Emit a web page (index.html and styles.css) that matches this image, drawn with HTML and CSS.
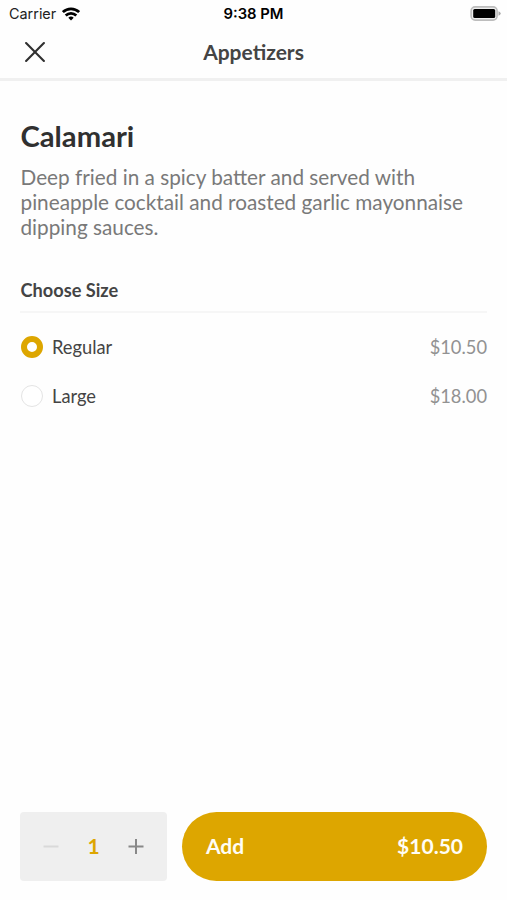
FILE: index.html
```html
<!DOCTYPE html>
<html lang="en">
<head>
<meta charset="utf-8">
<title>Appetizers</title>
<link rel="stylesheet" href="styles.css">
</head>
<body>
<div class="screen">
  <div class="status">
    <div class="carrier">
      <span>Carrier</span>
      <svg class="wifi" width="18" height="14" viewBox="0 0 18 14" fill="none" stroke="#000" stroke-width="2.7">
        <path d="M.9 5.1a11.6 11.6 0 0 1 16.2 0"/>
        <path d="M3.7 8.5a7.6 7.6 0 0 1 10.6 0"/>
        <path d="M6.3 10.8a3.9 3.9 0 0 1 5.4 0L9 13.5z" fill="#000" stroke="none"/>
      </svg>
    </div>
    <span class="time">9:38 PM</span>
    <svg class="battery" width="31" height="15" viewBox="0 0 31 15">
      <rect x="1.1" y=".9" width="26" height="13.2" rx="4" fill="#eee" stroke="#bdbdbd" stroke-width="1.6"/>
      <rect x="3.2" y="3" width="22" height="9" rx="1.5" fill="#000"/>
      <path d="M28.5 5.2q2.2 1 2.2 2.3t-2.2 2.3z" fill="#aaa"/>
    </svg>
  </div>
  <header class="nav">
    <svg class="close" width="20" height="20" viewBox="0 0 20 20" fill="none" stroke="#303030" stroke-width="2.1" stroke-linecap="round">
      <path d="M1.1 1.1l17.8 17.8M18.9 1.1L1.1 18.9"/>
    </svg>
    <h1>Appetizers</h1>
  </header>
  <main>
    <h2>Calamari</h2>
    <p class="description">Deep fried in a spicy batter and served with pineapple cocktail and roasted garlic mayonnaise dipping sauces.</p>
    <h3>Choose Size</h3>
    <div class="option"><span class="radio selected"></span><span class="label">Regular</span><span class="price">$10.50</span></div>
    <div class="option"><span class="radio"></span><span class="label">Large</span><span class="price">$18.00</span></div>
  </main>
  <footer>
    <div class="stepper">
      <svg width="16" height="16" viewBox="0 0 16 16" stroke="#d9d9d9" stroke-width="2"><path d="M.5 7.5h15"/></svg>
      <span class="count">1</span>
      <svg width="16" height="16" viewBox="0 0 16 16" stroke="#888" stroke-width="2"><path d="M.5 7.5h15M8 0v15"/></svg>
    </div>
    <div class="add"><span>Add</span><span>$10.50</span></div>
  </footer>
</div>
</body>
</html>
```
FILE: styles.css
```css
* { box-sizing: border-box; }
body { margin: 0; background: #fefefe; font-family: Lato, "Liberation Sans", sans-serif; color: #444; }
h1, h2, h3, p { margin: 0; }
svg { display: block; }
.screen { height: 900px; display: flex; flex-direction: column; }
.status { height: 27px; display: grid; grid-template-columns: 1fr auto 1fr; align-items: center; padding: 0 6px 0 9px; font-family: Inter, sans-serif; font-size: 14.4px; color: #222; }
.carrier { display: flex; align-items: center; gap: 6px; }
.time { margin-right: 3px; font-weight: 600; font-size: 14.8px; color: #000; }
.battery { justify-self: end; }
.nav { height: 54px; display: grid; grid-template-columns: 20px 1fr 20px; align-items: center; padding: 0 25px 1px; border-bottom: 3px solid #f0f0f0; }
.nav h1 { text-align: center; font-size: 21px; line-height: 26px; font-weight: 700; }
main { flex: 1; padding: 36px 20px 0; }
h2 { padding-left: .5px; font-size: 29.2px; line-height: 38px; font-weight: 700; color: #303030; }
.description { margin-top: 10px; padding-left: .5px; font-size: 20.75px; line-height: 25px; color: #797979; }
h3 { margin-top: 37px; padding: 0 0 8px .5px; border-bottom: 2px solid #f6f6f6; font-size: 18.2px; line-height: 26px; font-weight: 700; }
.option { display: flex; align-items: center; height: 49px; font-size: 18.3px; }
h3 + .option { margin-top: 9px; }
.radio { width: 22px; height: 22px; margin-left: .5px; border: 1.5px solid #e4e4e4; border-radius: 50%; background: #fff; }
.radio.selected { border: 6px solid #dda600; }
.label { margin-left: 9.5px; padding-top: 1px; }
.price { margin-left: auto; padding-top: 1px; color: #929292; }
footer { height: 107px; display: flex; gap: 15px; padding: 19px 20px 19px; }
.stepper { width: 147px; height: 69px; display: flex; align-items: center; justify-content: space-between; padding: 0 23px; border-radius: 4px; background: #efefef; }
.count { margin-top: -2px; color: #dda600; font-size: 21px; font-weight: 700; }
.add { flex: 1; height: 69px; display: flex; align-items: center; justify-content: space-between; padding: 0 24px 2px; border-radius: 35px; background: #dda600; color: #fffdf5; font-size: 21px; font-weight: 700; }
```
